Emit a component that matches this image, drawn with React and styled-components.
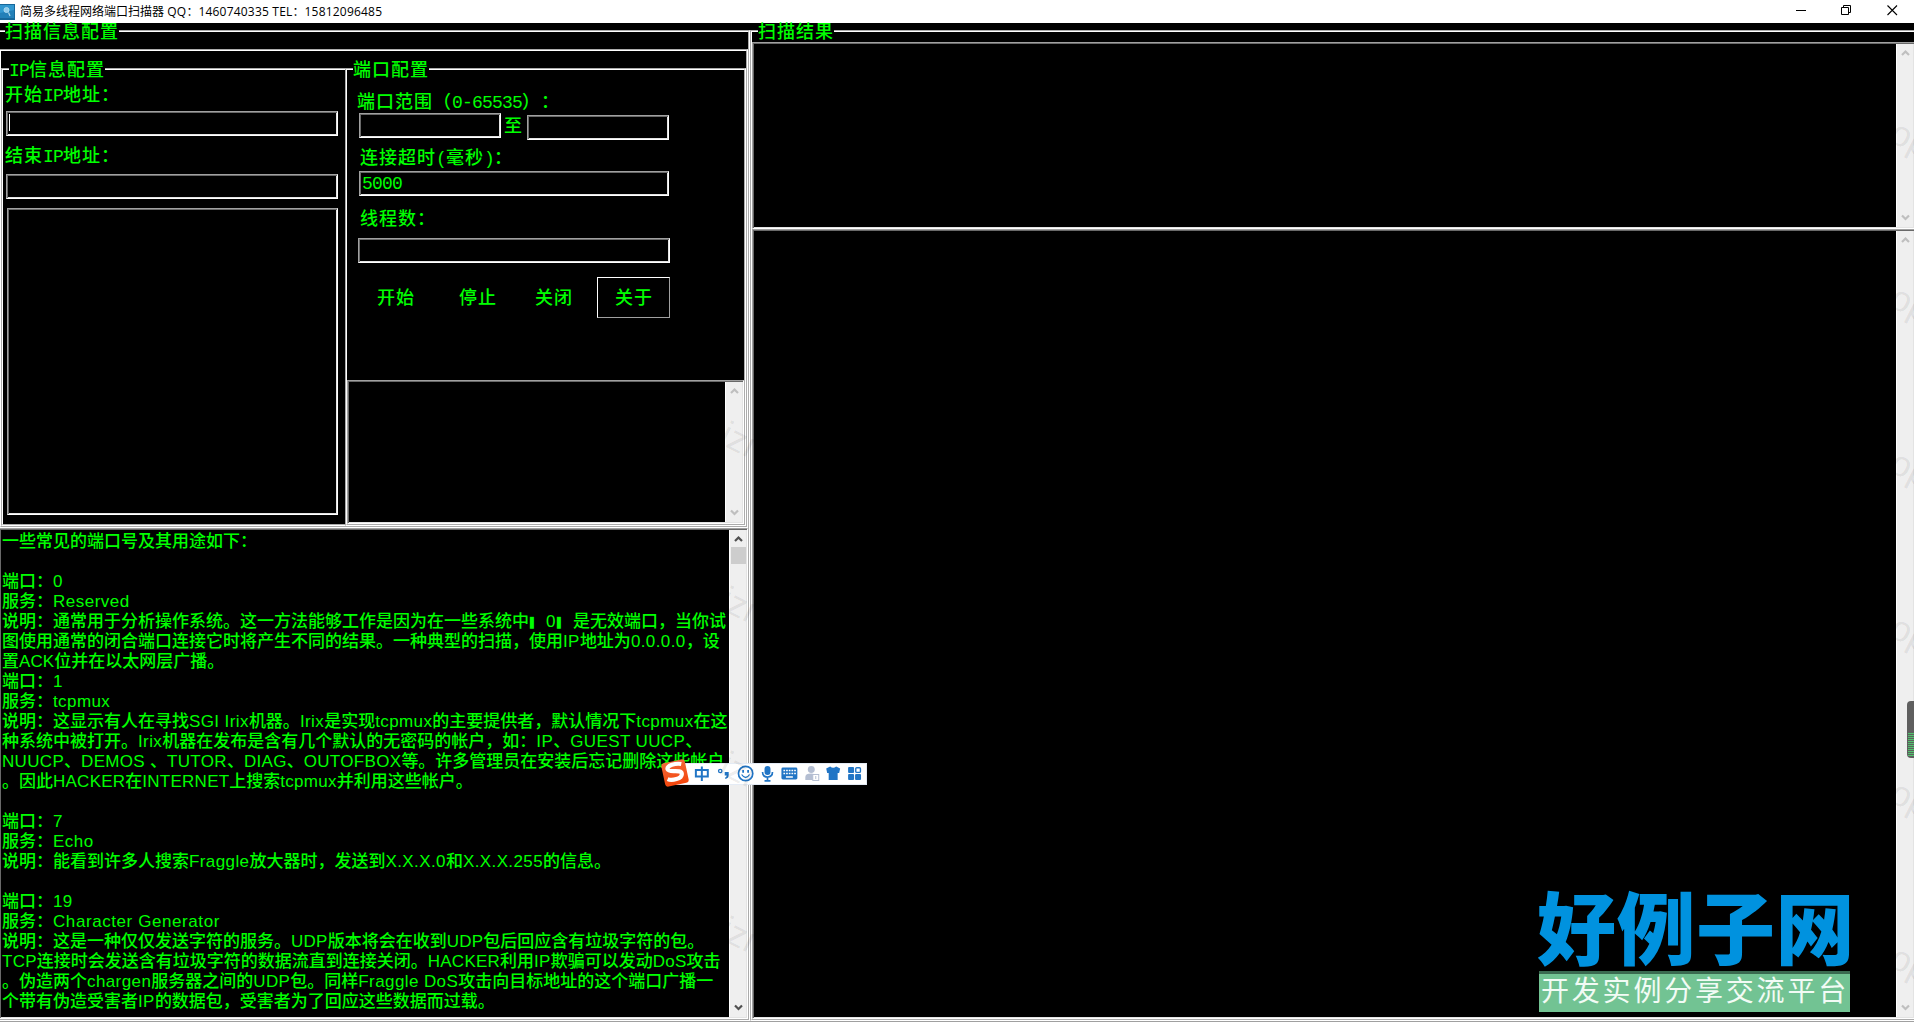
import React from "react";
import styled, { createGlobalStyle } from "styled-components";

const GlobalStyle = createGlobalStyle`
  * {
    box-sizing: border-box;
  }
  body {
    margin: 0;
    background: #000;
    overflow: hidden;
  }
`;

const Window = styled.div`
  position: relative;
  width: 1914px;
  height: 1022px;
  overflow: hidden;
  background: #000;
  color: #00ff00;
  font-family: "Noto Sans CJK SC", sans-serif;
  text-spacing-trim: space-all;
`;

const TitleBar = styled.header`
  display: flex;
  align-items: center;
  height: 23px;
  background: #fff;
  color: #000;

  .app-icon {
    display: block;
    margin-right: 5px;
  }
  .controls {
    display: flex;
    gap: 35px;
    margin-left: auto;
    margin-right: 16px;
    margin-bottom: 2px;
  }
`;

const Title = styled.h1`
  margin: 0;
  font: 12px/20px "Open Sans", "Noto Sans CJK SC", sans-serif;
  white-space: pre;

  span {
    letter-spacing: 0.2px;
  }
`;

const Body = styled.main`
  display: flex;
  width: 1920px;
  height: 998px;
`;

const Group = styled.fieldset`
  flex: none;
  min-width: 0;
  margin: ${(p) => p.$margin || "0"};
  padding: ${(p) => p.$padding || "0"};
  width: ${(p) => p.$width}px;
  height: ${(p) => p.$height}px;
  border: 2px groove #fff;
  display: ${(p) => (p.$row ? "flex" : "block")};
`;

const Legend = styled.legend`
  display: block;
  margin-left: ${(p) => p.$left}px;
  padding: 0;
  height: 16px;
  font-size: 18px;
  font-weight: 500;
  line-height: 14px;
  letter-spacing: 1px;
  white-space: nowrap;
`;

const Mono = styled.span`
  font-family: "Liberation Mono", monospace;
  font-size: 18px;
  font-weight: 400;
  line-height: 1;
  letter-spacing: -0.8px;
`;

const Label = styled.div`
  flex: none;
  margin: ${(p) => p.$top || 0}px 0 0 ${(p) => p.$left || 0}px;
  width: ${(p) => (p.$width ? `${p.$width}px` : "auto")};
  height: 20px;
  font-size: 18px;
  font-weight: 500;
  line-height: 18px;
  letter-spacing: 1px;
  white-space: nowrap;
`;

const Sunken = styled.div`
  flex: none;
  display: flex;
  margin: ${(p) => p.$top || 0}px 0 0 ${(p) => p.$left || 0}px;
  width: ${(p) => p.$width}px;
  height: ${(p) => p.$height}px;
  padding: 1px;
  border: 1px solid;
  border-color: #a0a0a0 #fff #fff #a0a0a0;
  box-shadow: inset 1px 1px #696969, inset -1px -1px #e3e3e3;
  background: #000;
`;

const Field = styled(Sunken)`
  padding-left: 2px;
  font-size: 18px;

  ${Mono} {
    line-height: 22px;
  }
`;

const Caret = styled.span`
  width: 1px;
  height: 17px;
  margin-top: 1px;
  background: #fff;
`;

const FieldRow = styled.div`
  display: flex;
  align-items: flex-start;
  margin: 2px 0 0 12px;
  height: 27px;
`;

const Buttons = styled.div`
  display: flex;
  margin: 14px 0 0 12px;
`;

const Button = styled.button`
  width: 73px;
  height: 41px;
  margin: 0 ${(p) => p.$gap || 0}px 0 0;
  padding: 0 0 4px 1px;
  background: #000;
  color: inherit;
  font: 500 18px/20px "Noto Sans CJK SC", sans-serif;
  letter-spacing: 1px;
  border: 1px solid;
  border-color: ${(p) => (p.$raised ? "#fff #a0a0a0 #a0a0a0 #fff" : "#000")};
`;

const Bar = styled.div`
  flex: none;
  display: flex;
  flex-direction: column;
  align-items: center;
  width: ${(p) => p.$width}px;
  margin-left: auto;
  padding: 5px 0;
  border-left: 1px solid #fff;
  background: #efefef;
  color: ${(p) => (p.$active ? "#505050" : "#bfbfbf")};

  svg {
    flex: none;
    display: block;
  }
  svg:last-child {
    margin-top: auto;
  }
  .thumb {
    width: 15px;
    height: 17px;
    margin-top: 4px;
    background: #cdcdcd;
  }
`;

const Notes = styled.div`
  flex: 1;
  min-width: 0;
  padding: 0 0 0 1px;
  font-size: 17px;
  font-weight: 500;
`;

const Line = styled.p`
  margin: 0;
  height: 20px;
  line-height: 20px;
  white-space: pre;

  span {
    font-family: "Liberation Sans", sans-serif;
    font-size: 17px;
    font-weight: 400;
    letter-spacing: ${(p) => p.$spacing}px;
  }
  b {
    display: inline-block;
    width: 12px;
    padding-left: 1px;
    font: 10px/12px "DejaVu Sans", sans-serif;
    vertical-align: 1px;
  }
`;

const ImeBar = styled.div`
  position: absolute;
  left: 670px;
  top: 763px;
  display: flex;
  align-items: center;
  width: 197px;
  height: 22px;
  background: #fff;
  border: 1px solid #e4ebf5;
  border-left: 0;

  > svg {
    display: block;
  }
  .badge {
    position: absolute;
    left: -11px;
    top: -7px;
  }
`;

const Stamp = styled.div`
  position: absolute;
  left: 1537px;
  top: 881px;
  width: 320px;

  .name {
    height: 90px;
    font-size: 79px;
    font-weight: 800;
    line-height: 87px;
    color: #0092df;
    white-space: nowrap;
    letter-spacing: 0.5px;
  }
  .tagline {
    width: 311px;
    height: 41px;
    margin-left: 2px;
    padding-left: 2px;
    border-top: 3px solid #3a6a50;
    background: #72c393;
    color: #f2fbf5;
    font-size: 28px;
    line-height: 31px;
    letter-spacing: 2.8px;
    white-space: nowrap;
  }
`;

const Ghost = styled.span`
  position: absolute;
  left: ${(p) => p.$x}px;
  top: ${(p) => p.$y}px;
  width: ${(p) => p.$clip}px;
  height: 70px;
  overflow: hidden;
  color: rgba(0, 0, 0, 0.08);
  font: 36px/40px "Liberation Sans", sans-serif;

  i {
    display: block;
    font-style: normal;
    transform: rotate(27deg);
    transform-origin: 0 0;
    margin-left: 12px;
  }
`;

const Gauge = styled.div`
  position: absolute;
  left: 1907px;
  top: 701px;
  width: 10px;
  height: 57px;
  padding: 32px 0 1px 1px;
  border-radius: 4px;
  background: #5f5f5f;

  div {
    height: 24px;
    background: repeating-linear-gradient(#4fc46c 0 1px, #5f5f5f 1px 2px);
  }
`;

const BottomEdge = styled.div`
  height: 1px;
  background: #a0a0a0;
`;

const Chevron = ({ down }) => (
  <svg width="9" height="8" viewBox="0 0 9 8">
    <path
      d={down ? "M1 1.5 L4.5 5 L8 1.5" : "M1 6 L4.5 2.5 L8 6"}
      fill="none"
      stroke="currentColor"
      strokeWidth="2.2"
    />
  </svg>
);

const ScrollBar = ({ width, active }) => (
  <Bar $width={width} $active={active}>
    <Chevron />
    {active && <div className="thumb" />}
    <Chevron down />
  </Bar>
);

// splits a line into latin runs, half blocks and full-width runs
const Mixed = ({ text, as: Latin = "span" }) =>
  text.split(/([\x20-\x7e]+|▌)/).map((run, i) => {
    if (run === "▌") return <b key={i}>{run}</b>;
    return i % 2 ? <Latin key={i}>{run}</Latin> : run;
  });

const notes = [
  ["一些常见的端口号及其用途如下："],
  [""],
  ["端口：0"],
  ["服务：Reserved", 0.5],
  ["说明：通常用于分析操作系统。这一方法能够工作是因为在一些系统中▌ 0▌ 是无效端口，当你试"],
  ["图使用通常的闭合端口连接它时将产生不同的结果。一种典型的扫描，使用IP地址为0.0.0.0，设"],
  ["置ACK位并在以太网层广播。", 0.1],
  ["端口：1"],
  ["服务：tcpmux"],
  ["说明：这显示有人在寻找SGI Irix机器。Irix是实现tcpmux的主要提供者，默认情况下tcpmux在这"],
  ["种系统中被打开。Irix机器在发布是含有几个默认的无密码的帐户，如：IP、GUEST UUCP、"],
  ["NUUCP、DEMOS 、TUTOR、DIAG、OUTOFBOX等。许多管理员在安装后忘记删除这些帐户", 0.32],
  ["。因此HACKER在INTERNET上搜索tcpmux并利用这些帐户。", 0.25],
  [""],
  ["端口：7"],
  ["服务：Echo", 0.5],
  ["说明：能看到许多人搜索Fraggle放大器时，发送到X.X.X.0和X.X.X.255的信息。"],
  [""],
  ["端口：19"],
  ["服务：Character Generator", 0.58],
  ["说明：这是一种仅仅发送字符的服务。UDP版本将会在收到UDP包后回应含有垃圾字符的包。", 0.25],
  ["TCP连接时会发送含有垃圾字符的数据流直到连接关闭。HACKER利用IP欺骗可以发动DoS攻击", 0.25],
  ["。伪造两个chargen服务器之间的UDP包。同样Fraggle DoS攻击向目标地址的这个端口广播一"],
  ["个带有伪造受害者IP的数据包，受害者为了回应这些数据而过载。"],
];

const AppIcon = () => (
  <svg className="app-icon" width="15" height="16" viewBox="0 0 15 16">
    <rect width="15" height="16" fill="#17689b" />
    <rect y="1" width="14" height="13" fill="#3297cf" />
    <path d="M0 9 L14 6 V14 H0Z" fill="#2380b8" />
    <circle cx="6.5" cy="6" r="2.5" fill="#8ecbec" stroke="#a9d8ef" />
    <path d="M8.5 8.5 L10 12" stroke="#b0d8ec" strokeWidth="1.2" />
  </svg>
);

const WindowControls = () => (
  <div className="controls">
    <svg width="11" height="11" viewBox="0 0 11 11">
      <path d="M1 5.5 H11" stroke="#000" />
    </svg>
    <svg width="11" height="11" viewBox="0 0 11 11">
      <path d="M.5 2.5 H7.5 V9.5 H.5Z M2.5 2.5 V.5 H9.5 V7.5 H7.5" fill="none" stroke="#000" />
    </svg>
    <svg width="11" height="11" viewBox="0 0 11 11">
      <path d="M.5 .5 L10 10 M10 .5 L.5 10" stroke="#000" strokeWidth="1.1" />
    </svg>
  </div>
);

const Ime = () => (
  <ImeBar>
    <svg className="badge" width="32" height="32" viewBox="0 0 32 32">
      <defs>
        <linearGradient id="flame" x1="0" y1="0" x2="0" y2="1">
          <stop offset="0" stopColor="#f2683a" />
          <stop offset="1" stopColor="#f4460c" />
        </linearGradient>
      </defs>
      <g transform="rotate(-12 16 16)">
        <rect x="4" y="4" width="24" height="24" rx="3" fill="url(#flame)" />
        <path
          d="M24 8.5 C19 6.5 9 6.5 9.5 11 C10 15 23 13 22.5 18 C22 23.5 11 23 7.5 20.5"
          fill="none"
          stroke="#fff"
          strokeWidth="4.2"
        />
      </g>
    </svg>
    <svg width="197" height="22" viewBox="0 0 197 22" fill="none" stroke="#2175c5" strokeWidth="2">
      <path d="M26 7 H38 V13.5 H26Z M32 3.5 V18" />
      <circle cx="50.5" cy="8" r="1.7" strokeWidth="1.3" />
      <path d="M55 9 H59 V12 Q59 15.5 55.5 16 V14.5 Q57 14 57 12.5 H55Z" fill="#2175c5" stroke="none" />
      <circle cx="76" cy="10.5" r="7.2" strokeWidth="1.7" />
      <path d="M73.5 7 V9.8 M78.5 7 V9.8" strokeWidth="1.8" />
      <path d="M72 11.5 Q76 17.5 80 11.5" strokeWidth="1.3" />
      <rect x="95" y="3" width="6" height="9" rx="3" fill="#2175c5" stroke="none" />
      <path d="M93 9 Q93 14 98 14 Q103 14 103 9 M98 14 V18 M95 18 H101" strokeWidth="1.7" />
      <rect x="112" y="4.5" width="16" height="12" rx="1.5" fill="#2175c5" stroke="none" />
      <path d="M114 7.5 H126.5 M114 10.5 H126.5" stroke="#fff" strokeWidth="1.5" strokeDasharray="1.7 1" />
      <path d="M116.5 14 H123.5" stroke="#fff" strokeWidth="1.5" />
      <g stroke="none" fill="#b4bed2">
        <circle cx="142" cy="6.5" r="3.5" />
        <path d="M136 17 V14 Q136 10.5 142 10.5 Q146 10.5 146 14 V17Z" />
        <rect x="143.5" y="11.5" width="6" height="6" fill="#fff" stroke="#b4bed2" strokeWidth="1" />
        <path d="M146 13 H147 V16 H146Z" />
      </g>
      <path d="M161 3.5 Q164 6 167 3.5 L171 5.5 L170 10 H168.5 V17 H159.5 V10 H158 L157 5.5Z" fill="#2175c5" stroke="none" />
      <g fill="#2175c5" stroke="none">
        <rect x="179" y="4" width="6" height="6" rx="1" />
        <rect x="179" y="11" width="6" height="6" rx="1" />
        <rect x="186" y="11" width="6" height="6" rx="1" />
        <rect x="186.7" y="4.7" width="4.700" height="4.700" rx="1" fill="#fff" stroke="#2175c5" strokeWidth="1.400" />
      </g>
    </svg>
  </ImeBar>
);

const ScanSettings = () => (
  <Group $width={752} $height={998} $margin="0 0 0 -2px">
    <Legend $left={5}>扫描信息配置</Legend>
    <Group $width={749} $height={479} $margin="10px 0 0 -1px" $padding="10px 0 0" $row>
      <Group $width={346} $height={465}>
        <Legend $left={6}>
          <Mixed text="IP信息配置" as={Mono} />
        </Legend>
        <Label $top={7} $left={2}>
          <Mixed text="开始IP地址：" as={Mono} />
        </Label>
        <Field $top={7} $left={3} $width={332} $height={25}>
          <Caret />
        </Field>
        <Label $top={9} $left={2}>
          <Mixed text="结束IP地址：" as={Mono} />
        </Label>
        <Field $top={9} $left={3} $width={332} $height={25} />
        <Sunken $top={9} $left={4} $width={331} $height={307} />
      </Group>
      <Group $width={401} $height={465} $margin="0 0 0 -2px">
        <Legend $left={6}>端口配置</Legend>
        <Label $top={14} $left={10}>
          <Mixed text="端口范围（0-65535）：" as={Mono} />
        </Label>
        <FieldRow>
          <Field $width={142} $height={25} />
          <Label $top={2} $left={3} $width={23}>至</Label>
          <Field $top={2} $width={142} $height={25} />
        </FieldRow>
        <Label $top={7} $left={13}>
          <Mixed text="连接超时(毫秒)：" as={Mono} />
        </Label>
        <Field $top={4} $left={12} $width={310} $height={25}>
          <Mono>5000</Mono>
        </Field>
        <Label $top={12} $left={13}>线程数：</Label>
        <Field $top={10} $left={11} $width={312} $height={25} />
        <Buttons>
          <Button $gap={9}>开始</Button>
          <Button $gap={3}>停止</Button>
          <Button $gap={7}>关闭</Button>
          <Button $raised>关于</Button>
        </Buttons>
        <Sunken $top={62} $width={397} $height={144}>
          <ScrollBar width={17} />
        </Sunken>
      </Group>
    </Group>
    <Sunken $left={-1} $width={749} $height={491}>
      <Notes>
        {notes.map(([text, spacing = 0.4], i) => (
          <Line key={i} $spacing={spacing}>
            <Mixed text={text} />
          </Line>
        ))}
      </Notes>
      <ScrollBar width={17} active />
    </Sunken>
  </Group>
);

const ScanResults = () => (
  <Group $width={1167} $height={998}>
    <Legend $left={6}>扫描结果</Legend>
    <Sunken $top={3} $width={1163} $height={187}>
      <ScrollBar width={17} />
    </Sunken>
    <Sunken $width={1163} $height={790}>
      <ScrollBar width={17} />
    </Sunken>
  </Group>
);

const App = () => (
  <Window>
    <GlobalStyle />
    <TitleBar>
      <AppIcon />
      <Title>
        <Mixed text="简易多线程网络端口扫描器 QQ：1460740335 TEL：15812096485" />
      </Title>
      <WindowControls />
    </TitleBar>
    <Body>
      <ScanSettings />
      <ScanResults />
    </Body>
    <BottomEdge />
    <Stamp>
      <div className="name">好例子网</div>
      <div className="tagline">开发实例分享交流平台</div>
    </Stamp>
    <Ime />
    {[414, 579, 744, 909].map((y) => (
      <Ghost key={y} $x={720} $y={y} $clip={34}>
        <i>izi</i>
      </Ghost>
    ))}
    {[112, 277, 442, 607, 772, 937].map((y) => (
      <Ghost key={y} $x={1890} $y={y} $clip={24}>
        <i>op</i>
      </Ghost>
    ))}
    <Gauge>
      <div />
    </Gauge>
  </Window>
);

export default App;
